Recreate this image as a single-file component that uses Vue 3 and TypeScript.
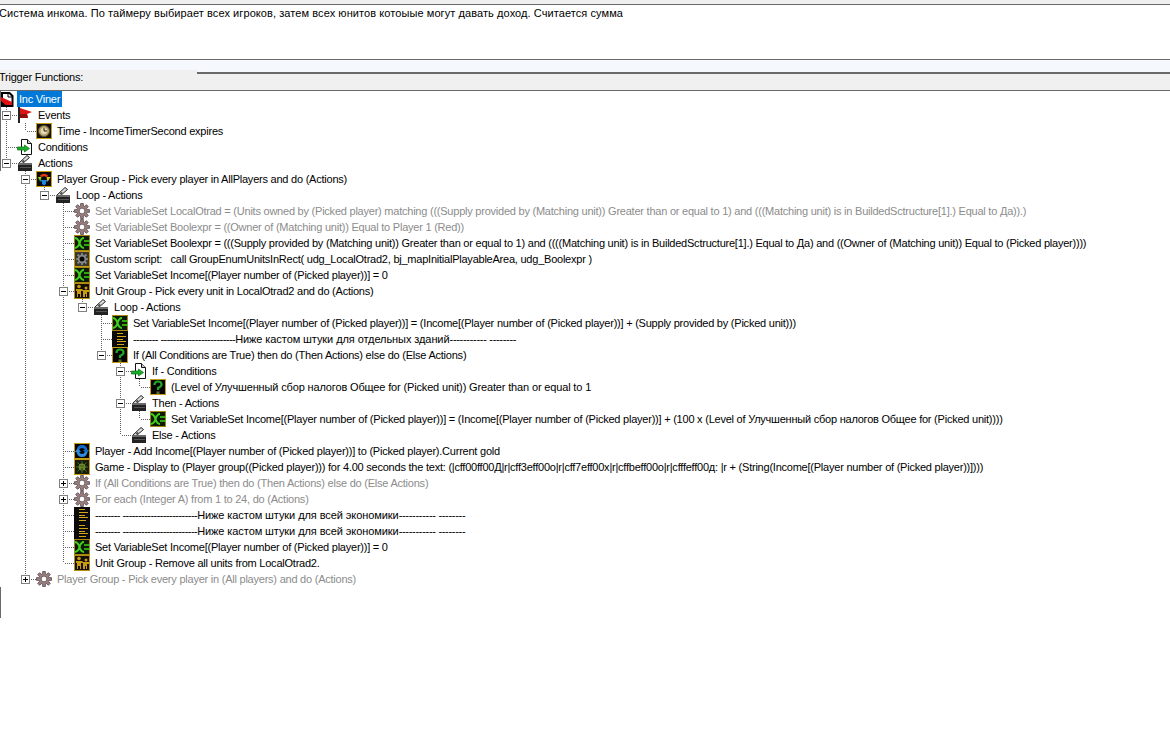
<script setup lang="ts">
type Kind = 'trigger' | 'flag' | 'clock' | 'cond' | 'clap' | 'pg' | 'gear' | 'set' | 'custom' | 'unit' | 'comment' | 'quest' | 'player' | 'game'
interface Part { s: string; ls?: number }
interface Node { t: string; k: Kind; off?: boolean; closed?: boolean; ls?: number; kids?: Node[] }
interface Cell { v: 'none' | 'pass' | 'tee' | 'end'; box: '' | 'minus' | 'plus' }
interface Row { parts: Part[]; k: Kind; off: boolean; cells: Cell[]; root: boolean }

const tree: Node = {
  t: 'Inc Viner', k: 'trigger', kids: [
    { t: 'Events', k: 'flag', kids: [{ t: 'Time - IncomeTimerSecond expires', k: 'clock' }] },
    { t: 'Conditions', k: 'cond' },
    { t: 'Actions', k: 'clap', kids: [
      { t: 'Player Group - Pick every player in AllPlayers and do (Actions)', k: 'pg', kids: [
        { t: 'Loop - Actions', k: 'clap', kids: [
          { t: 'Set VariableSet LocalOtrad = (Units owned by (Picked player) matching (((Supply provided by (Matching unit)) Greater than or equal to 1) and (((Matching unit) is in BuildedSctructure[1].) Equal to Да)).)', k: 'gear', off: true },
          { t: 'Set VariableSet Boolexpr = ((Owner of (Matching unit)) Equal to Player 1 (Red))', k: 'gear', off: true },
          { t: 'Set VariableSet Boolexpr = (((Supply provided by (Matching unit)) Greater than or equal to 1) and ((((Matching unit) is in BuildedSctructure[1].) Equal to Да) and ((Owner of (Matching unit)) Equal to (Picked player))))', k: 'set' },
          { t: 'Custom script:   call GroupEnumUnitsInRect( udg_LocalOtrad2, bj_mapInitialPlayableArea, udg_Boolexpr )', k: 'custom' },
          { t: 'Set VariableSet Income[(Player number of (Picked player))] = 0', k: 'set' },
          { t: 'Unit Group - Pick every unit in LocalOtrad2 and do (Actions)', k: 'unit', kids: [
            { t: 'Loop - Actions', k: 'clap', kids: [
              { t: 'Set VariableSet Income[(Player number of (Picked player))] = (Income[(Player number of (Picked player))] + (Supply provided by (Picked unit)))', k: 'set' },
              { t: '-------- ------------------------Ниже кастом штуки для отдельных зданий----------- --------', k: 'comment' },
              { t: 'If (All Conditions are True) then do (Then Actions) else do (Else Actions)', k: 'quest', kids: [
                { t: 'If - Conditions', k: 'cond', kids: [{ t: '(Level of Улучшенный сбор налогов Общее for (Picked unit)) Greater than or equal to 1', k: 'quest', ls: -0.15 }] },
                { t: 'Then - Actions', k: 'clap', kids: [{ t: 'Set VariableSet Income[(Player number of (Picked player))] = (Income[(Player number of (Picked player))] + (100 x (Level of Улучшенный сбор налогов Общее for (Picked unit))))', k: 'set' }] },
                { t: 'Else - Actions', k: 'clap' }
              ] }
            ] }
          ] },
          { t: 'Player - Add Income[(Player number of (Picked player))] to (Picked player).Current gold', k: 'player' },
          { t: 'Game - Display to (Player group((Picked player))) for 4.00 seconds the text: (|cff00ff00Д|r|cff3eff00o|r|cff7eff00x|r|cffbeff00o|r|cfffeff00д: |r + (String(Income[(Player number of (Picked player))])))', k: 'game' },
          { t: 'If (All Conditions are True) then do (Then Actions) else do (Else Actions)', k: 'gear', off: true, closed: true },
          { t: 'For each (Integer A) from 1 to 24, do (Actions)', k: 'gear', off: true, closed: true },
          { t: '-------- ------------------------Ниже кастом штуки для всей экономики----------- --------', k: 'comment' },
          { t: '-------- ------------------------Ниже кастом штуки для всей экономики----------- --------', k: 'comment' },
          { t: 'Set VariableSet Income[(Player number of (Picked player))] = 0', k: 'set' },
          { t: 'Unit Group - Remove all units from LocalOtrad2.', k: 'unit' }
        ] }
      ] },
      { t: 'Player Group - Pick every player in (All players) and do (Actions)', k: 'gear', off: true, closed: true }
    ] }
  ]
}

function splitParts(n: Node): Part[] {
  if (n.k !== 'comment') return [{ s: n.t, ls: n.ls }]
  const m = n.t.match(/^([- ]+)(.*?)(-+ -+)$/)
  if (!m) return [{ s: n.t }]
  return [{ s: m[1], ls: -0.55 }, { s: m[2], ls: -0.08 }, { s: m[3], ls: -0.3 }]
}

function flatten(n: Node, trail: boolean[], last: boolean, out: Row[]): Row[] {
  const cells: Cell[] = trail.map((more, i) => {
    if (i < trail.length - 1) return { v: more ? 'pass' : 'none', box: '' } as Cell
    const box = n.closed ? 'plus' : n.kids ? 'minus' : ''
    return { v: last ? 'end' : 'tee', box } as Cell
  })
  out.push({ parts: splitParts(n), k: n.k, off: !!n.off, cells, root: trail.length === 0 })
  const kids = n.kids ?? []
  kids.forEach((c, i) => {
    const next = [...trail.slice(0, -1), ...(trail.length ? [!last] : []), i < kids.length - 1]
    flatten(c, next, i === kids.length - 1, out)
  })
  return out
}
const rows = flatten(tree, [], true, [])

function gearPath(rOut: number, rIn: number): string {
  const pt = (r: number, deg: number) => {
    const a = (deg * Math.PI) / 180
    return `${(8 + r * Math.sin(a)).toFixed(2)} ${(8 - r * Math.cos(a)).toFixed(2)}`
  }
  let d = ''
  for (let i = 0; i < 8; i++) {
    const a = i * 45
    d += `${i ? 'L' : 'M'}${pt(rIn, a - 15)}L${pt(rOut, a - 10)}L${pt(rOut, a + 10)}L${pt(rIn, a + 15)}`
  }
  return d + 'Z'
}
const gearBig = gearPath(7.7, 5.4)
const gearSmall = gearPath(6.6, 4.6)
</script>

<template>
  <div class="editor">
    <div class="strip"></div>
    <div class="comment-pane">
      <p class="desc">Система инкома. По таймеру выбирает всех игроков, затем всех юнитов котоыые могут давать доход. Считается сумма</p>
    </div>
    <div class="fn-bar">
      <div class="fn-left"><div class="fn-label">Trigger Functions:</div></div>
      <div class="fn-right"><div class="fn-rule"></div></div>
    </div>
    <div class="tree">
      <span class="edge edge-a"></span>
      <span class="edge edge-b"></span>
      <div v-for="(r, i) in rows" :key="i" class="row" :class="{ off: r.off }">
        <span v-for="(c, j) in r.cells" :key="j" class="cell" :class="c.v">
          <span v-if="c.box" class="box" :class="c.box"></span>
        </span>
        <svg class="ico" viewBox="0 0 16 16" width="16" height="16">
          <template v-if="r.k === 'trigger'">
            <path d="M4 2h7.500l3 3v10H4z" fill="#fff" stroke="#000" stroke-width="2"/>
            <path d="M3 6l11 5v3H3z" fill="#e01010"/><path d="M3 10l6 5H3z" fill="#000"/><path d="M10 2v4h5" fill="none" stroke="#000"/>
          </template>
          <template v-else-if="r.k === 'flag'">
            <rect x="1" y="0" width="2" height="16" fill="#222"/>
            <path d="M3 1l12 4-5 2 1 4H3z" fill="#d91515"/><path d="M3 7h7l1 4H3z" fill="#8f0d0d"/>
          </template>
          <template v-else-if="r.k === 'clock'">
            <rect x=".5" y=".5" width="15" height="15" fill="#111" stroke="#c79c12"/>
            <circle cx="8" cy="8" r="5.500" fill="#b9a670" stroke="#5d5030"/><circle cx="8" cy="8" r="3.200" fill="#e6dab4"/>
            <path d="M8 5v3h3" fill="none" stroke="#222"/>
          </template>
          <template v-else-if="r.k === 'cond'">
            <path d="M4.500 .5h6l4 4v11h-10z" fill="#fff" stroke="#111"/><path d="M10.500 .5v4h4" fill="#ccc" stroke="#111"/>
            <path d="M.5 8h7V6l5 3.500-5 3.500v-2h-7z" fill="#17b02a" stroke="#0b6a16" stroke-width=".7"/>
          </template>
          <template v-else-if="r.k === 'clap'">
            <path d="M2 8l8-7.500 2.500 2L5 9z" fill="#ddd" stroke="#222"/>
            <path d="M4.500 6.500l2-1.800 1.300 1.300-2 1.800z" fill="#555"/>
            <rect x="1" y="8" width="14" height="8" fill="#222"/><rect x="1" y="8" width="14" height="2" fill="#6a6a6a"/><rect x="3" y="12" width="11" height="1" fill="#555"/>
          </template>
          <template v-else-if="r.k === 'pg'">
            <rect x=".5" y=".5" width="15" height="15" fill="#0a0a0a" stroke="#c79c12"/>
            <path d="M3.500 5q4.500-4.500 9 0l-2.500 1q-2-1.500-4 0z" fill="#e0391a"/>
            <path d="M1.500 6l4 0-1 5z" fill="#2fb52f"/><path d="M14.500 6l-4 0 1 5z" fill="#d8c81e"/><path d="M3 6l2 0-1 3z" fill="#e6d51e"/>
            <path d="M4.500 9l7 0-1.500 2v2l-2 1.500-2-1.500v-2z" fill="#1e86e8"/>
          </template>
          <template v-else-if="r.k === 'gear'">
            <path :d="gearBig" fill="#97807f" stroke="#55444a" stroke-width=".8"/>
            <circle cx="8" cy="8" r="2.900" fill="#fff" stroke="#55444a" stroke-width=".8"/>
          </template>
          <template v-else-if="r.k === 'custom'">
            <rect x=".5" y=".5" width="15" height="15" fill="#3a3a30" stroke="#c79c12"/>
            <path :d="gearSmall" fill="#8c8c8c" stroke="#222" stroke-width=".6"/>
            <circle cx="8" cy="8" r="2.500" fill="#080808"/>
          </template>
          <template v-else-if="r.k === 'set'">
            <rect x=".5" y=".5" width="15" height="15" fill="#0c1a08" stroke="#a88510"/>
            <path d="M.5 3q3.500 0 5 5t4.500 5M.5 13q3.500 0 5-5t4.500-5" fill="none" stroke="#40d01c" stroke-width="2"/>
            <path d="M10 6h6M10 10h6" stroke="#40d01c" stroke-width="1.600"/>
          </template>
          <template v-else-if="r.k === 'unit'">
            <rect x=".5" y=".5" width="15" height="15" fill="#151005" stroke="#b58f10"/>
            <g fill="#c79c12">
              <circle cx="5" cy="3.500" r="1.800"/><path d="M2 6h6l1 1h6v2h-2v5h-1v-3h-1v3H9V8H7v6H6v-3H4v3H3V8H2z"/><circle cx="12" cy="5" r="1.500"/>
            </g>
          </template>
          <template v-else-if="r.k === 'comment'">
            <rect width="16" height="16" fill="#0a0a0a"/>
            <path d="M5 2.500h6M5 5.500h9M5 8.500h6M5 10.500h9M5 13.500h7" stroke="#d2a51a"/>
          </template>
          <template v-else-if="r.k === 'quest'">
            <rect x=".5" y=".5" width="15" height="15" fill="#050505" stroke="#c79c12"/>
            <path d="M4.500 6q0-3.500 3.500-3.500t3.500 3q0 2-3.500 3.500v2" fill="none" stroke="#22a52a" stroke-width="2.200"/>
            <rect x="6.500" y="12.500" width="3" height="2.500" fill="#5c6a2a"/>
          </template>
          <template v-else-if="r.k === 'player'">
            <rect x=".5" y=".5" width="15" height="15" fill="#060606" stroke="#c79c12"/>
            <path d="M2.500 7q1-5 5.500-5t5.500 5l2 0-3.500 3.500L9 7l2 0q-1-2-3-2T5 7z" fill="#1668c8"/>
            <path d="M13.500 9q-1 5-5.500 5t-5.500-5l-2 0L4 5.500 7 9l-2 0q1 2 3 2t3-2z" fill="#2f8ae0"/>
          </template>
          <template v-else>
            <rect x=".5" y=".5" width="15" height="15" fill="#171d0c" stroke="#c79c12"/>
            <path d="M8 2v12M2 8h12M3.500 3.500l9 9M12.500 3.500l-9 9" stroke="#4d6a22"/>
            <circle cx="8" cy="8" r="3.500" fill="#6a8a2a"/><path d="M6.500 6.500h1v1h-1zM8.500 6.500h1v1h-1zM7 9.500h2v1H7z" fill="#1a2208"/>
          </template>
        </svg>
        <span class="label" :class="{ sel: r.root }"><span v-for="(p, n) in r.parts" :key="n" :style="p.ls !== undefined ? { letterSpacing: p.ls + 'px' } : undefined">{{ p.s }}</span></span>
      </div>
    </div>
  </div>
</template>

<style>
html, body { margin: 0; background: #fff; overflow: hidden; }
</style>

<style scoped>
.editor { width: 1170px; height: 739px; overflow: hidden; background: #fff; font-family: "Liberation Sans", Arial, sans-serif; font-size: 11px; letter-spacing: -0.23px; color: #000; }
.strip { height: 4px; background: #f0f0f0; }
.comment-pane { height: 54px; border-top: 1px solid #696969; border-bottom: 1px solid #696969; }
.desc { margin: 0; margin-left: -1px; line-height: 16px; letter-spacing: 0.08px; white-space: nowrap; }
.fn-bar { display: flex; height: 30px; border-bottom: 1px solid #696969; background: #f0f0f0; }
.fn-left { width: 197px; border-top: 10px solid #f5f8fc; }
.fn-label { margin: -1px 0 0 -1px; line-height: 16px; white-space: nowrap; }
.fn-right { flex: 1; height: 14px; background: #f5f8fc; display: flex; align-items: flex-end; }
.fn-rule { flex: 1; height: 2px; background: #696969; }
.tree { position: relative; }
.edge { position: absolute; left: 0; width: 1px; background: #696969; }
.edge-a { top: 0; height: 80px; }
.edge-b { top: 496px; height: 31px; }
.row { display: flex; height: 16px; line-height: 16px; white-space: pre; }
.row.off { color: #8c8c8c; }
.cell { position: relative; flex: 0 0 19px; height: 16px; }
.cell.pass::before, .cell.tee::before, .cell.end::before { content: ""; position: absolute; left: 6px; top: 0; width: 1px; height: 16px; background: repeating-linear-gradient(to bottom, #606060 0 1px, transparent 1px 2px); }
.cell.end::before { height: 8px; }
.cell.tee::after, .cell.end::after { content: ""; position: absolute; left: 7px; top: 8px; width: 10px; height: 1px; background: repeating-linear-gradient(to right, transparent 0 1px, #606060 1px 2px); }
.box { position: absolute; z-index: 1; left: 2px; top: 4px; width: 7px; height: 7px; border: 1px solid #808080; background: #fff; }
.box::before { content: ""; position: absolute; left: 1px; top: 3px; width: 5px; height: 1px; background: #000; }
.box.plus::after { content: ""; position: absolute; left: 3px; top: 1px; width: 1px; height: 5px; background: #000; }
.ico { flex: none; margin-left: -2px; }
.label { margin-left: 3px; padding: 0 2px; }
.label.sel { background: #0078d7; color: #fff; }
</style>
